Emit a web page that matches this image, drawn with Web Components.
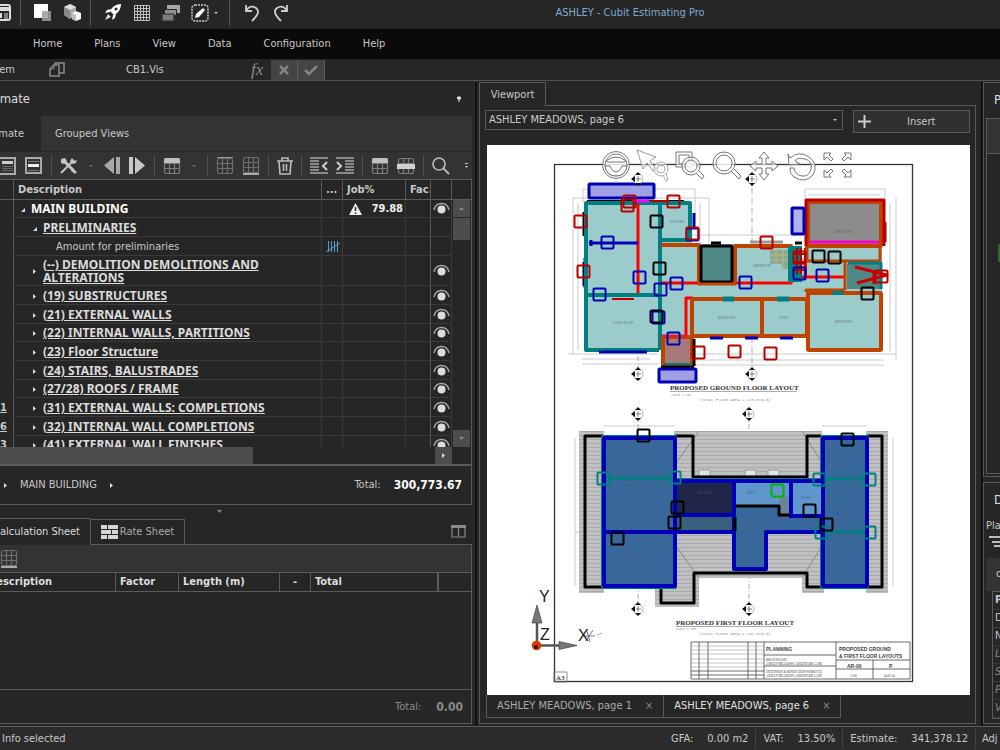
<!DOCTYPE html>
<html lang="en">
<head>
<meta charset="utf-8">
<title>ASHLEY - Cubit Estimating Pro</title>
<style>
  html, body { margin: 0; height: 100%; }
  body {
    --bg: #262626; --bar: #333333; --line: #5a5a5a; --soft: #3a3a3a; --thumb: #4d4d4d;
    background: #262626; color: #c8c8c8; overflow: hidden;
    font: 11px/16px "DejaVu Sans Condensed", "DejaVu Sans", "Noto Sans", sans-serif;
  }
</style>
</head>
<body>
<cubit-app></cubit-app>

<script>
const reset = `
  * { box-sizing: border-box; }
  button, input, select { font: inherit; color: inherit; background: none; border: 0; padding: 0; margin: 0; border-radius: 0; }
  button { display: flex; align-items: center; justify-content: center; }
  a { color: inherit; text-decoration: none; }
  table { border-spacing: 0; table-layout: fixed; width: 100%; }
  td, th { padding: 0; text-align: left; white-space: nowrap; overflow: hidden; }
`;
function define(tag, css, html, ready) {
  const tpl = document.createElement('template');
  tpl.innerHTML = `<style>${reset}${css}</style>${html}`;
  customElements.define(tag, class extends HTMLElement {
    constructor() {
      super();
      this.attachShadow({ mode: 'open' }).append(tpl.content.cloneNode(true));
    }
    connectedCallback() { if (ready) ready(this, this.shadowRoot); }
  });
}

/* ---------- icons ---------- */
const grid = (extra = '') => `<rect x="1.500" y="1.500" width="15" height="15" rx="2"/><path d="M1.500 6.500h15M1.500 11.500h15M6.500 1.500v15M11.500 1.500v15"/>${extra}`;
const ICONS = {
  form: `<rect x="-6" y="1" width="16" height="15" rx="2" fill="none" stroke="#ddd" stroke-width="2"/><path d="M-6 3h16v4h-16z" fill="#ddd"/><path d="M-1 9h3v5h-3z" fill="#ddd"/><path d="M4 10h4M4 12h4M4 14h4" stroke="#ddd"/>`,
  squares: `<path d="M8 7h9v10h-9z" fill="#8c8c8c"/><path d="M0 0h14v14h-14z" fill="#fff"/><path d="M8 7h6v7h-6z" fill="#aaa"/>`,
  cubes: `<path d="M7 0l6 3v8l-6 4-6-4v-8z" fill="#aaa"/><path d="M7 0l6 3-6 3-6-3z" fill="#ddd"/><path d="M7 6v9l-6-4v-8z" fill="#8a8a8a"/><path d="M13 7l5 2v6l-5 2-4-2v-6z" fill="#f4f4f4"/><path d="M13 11v6l-4-2v-6z" fill="#bbb"/>`,
  rocket: `<path d="M17 0c-5 0-9 3-11 7l4 4c4-2 7-6 7-11z" fill="#fff"/><path d="M7 5l-4 1-2 3 5-1zM12 10l-1 4-3 2 1-5z" fill="#fff"/><path d="M4 10l-3 6 6-3z" fill="#ddd"/><circle cx="12" cy="5" r="1.500" fill="#262626"/>`,
  mesh: `<path d="M1.500 1.500h15v15h-15zM4.500 1v16M7.500 1v16M10.500 1v16M13.500 1v16M1 4.500h16M1 7.500h16M1 10.500h16M1 13.500h16" fill="none" stroke="#bdbdbd"/>`,
  stack: `<path d="M5 1h13v8h-13z" fill="#a8a8a8"/><path d="M2.500 5.500h12v6h-12z" fill="#8e8e8e" stroke="#262626"/><path d="M0 10h12v7h-12z" fill="#7c7c7c" stroke="#262626"/>`,
  pencil: `<rect x="1" y="1" width="16" height="16" rx="3" fill="none" stroke="#ccc" stroke-width="1.500" stroke-dasharray="2 1"/><path d="M4 14l1-4 7-6 2 2-6 7z" fill="#fff"/>`,
  undo: `<path d="M3 1v6h6M3 7c2-4 6-6 10-3s2 7-4 13" fill="none" stroke="#ccc" stroke-width="1.800"/>`,
  redo: `<path d="M15 1v6h-6M15 7c-2-4-6-6-10-3s-2 7 4 13" fill="none" stroke="#ccc" stroke-width="1.800"/>`,
  caret: `<path d="M0 0h4l-2 2z" fill="currentColor"/>`,
  copies: `<path d="M6 2h9v10h-9z" fill="#262626" stroke="#8a8a8a" stroke-width="1.500"/><path d="M1 8l4-4h5v11h-9z" fill="#262626" stroke="#8a8a8a" stroke-width="1.500"/><path d="M1 8h4v-4" fill="none" stroke="#8a8a8a"/>`,
  cross: `<path d="M2 2l8 8M10 2l-8 8" stroke="#858585" stroke-width="2.500"/>`,
  tick: `<path d="M1 6l4 4 8-8" fill="none" stroke="#858585" stroke-width="2.500"/>`,
  pin: `<path d="M1 2h4M1.500 1h3v2h-3zM3 3v3" stroke="#ddd" fill="#ddd"/>`,
  band1: `<path d="M-2 1h17v16h-17z" fill="#333" stroke="#aaa" stroke-width="2"/><path d="M2 4h11v3h-11z" fill="#ccc"/><path d="M2 9.500h11M2 11.500h11M2 13.500h11" stroke="#666"/>`,
  band2: `<path d="M1 1h15v15h-15z" fill="none" stroke="#aaa" stroke-width="2"/><path d="M3 7h11v3h-11z" fill="#eee"/><path d="M3 4.500h11M3 13.500h11" stroke="#777"/>`,
  tools: `<path d="M4 4l10 10" stroke="#c4c4c4" stroke-width="3"/><path d="M1 16l13-13" stroke="#c4c4c4" stroke-width="2"/><path d="M1 2l4-1 2 3-3 3-3-1zM12 1l2 3 3-1-1 3-4 1-2-3zM13 12l4 3-2 2-4-3z" fill="#c4c4c4"/>`,
  prev: `<path d="M10 0v17l-10-8.500zM12 0h4v17h-4z" fill="#a8a8a8"/>`,
  next: `<path d="M6 0v17l10-8.500zM0 0h4v17h-4z" fill="#c8c8c8"/>`,
  gridtop: `<g fill="none" stroke="#7c7c7c" stroke-width="1.200">${grid()}</g><path d="M1 6v-3q0-2 2-2h12q2 0 2 2v3z" fill="#c0c0c0"/>`,
  gridmid: `<g fill="none" stroke="#7c7c7c" stroke-width="1.200">${grid()}</g><path d="M0 7h18v5h-18z" fill="#d0d0d0"/>`,
  gridline: `<g fill="none" stroke="#6e6e6e" stroke-width="1.200">${grid()}</g><path d="M1 0h16" stroke="#999" stroke-width="2"/>`,
  gridunder: `<g fill="none" stroke="#6e6e6e" stroke-width="1.200">${grid()}</g><path d="M1 18h16" stroke="#aaa" stroke-width="2"/>`,
  trash: `<path d="M0 4h16M5 4v-3h6v3M2 4l1 13h10l1-13M6.500 7v7M9.500 7v7" fill="none" stroke="#bdbdbd" stroke-width="1.600"/>`,
  outdent: `<path d="M0 1h18M0 4h9M0 7h9M0 10h9M0 13h9M0 16h18" stroke="#a8a8a8" stroke-width="1.500"/><path d="M17 5l-4 4 4 4" fill="none" stroke="#ccc" stroke-width="2"/>`,
  indent: `<path d="M0 1h18M9 4h9M9 7h9M9 10h9M9 13h9M0 16h18" stroke="#a8a8a8" stroke-width="1.500"/><path d="M1 5l4 4-4 4" fill="none" stroke="#ccc" stroke-width="2"/>`,
  search: `<circle cx="7" cy="7" r="6" fill="none" stroke="#bbb" stroke-width="1.600"/><path d="M11 11l6 6" stroke="#bbb" stroke-width="1.800"/>`,
  more: `<path d="M0 0h3v1h-3zM0 3h3l-1.500 2z" fill="#ccc"/>`,
  open: `<path d="M4 1v4h-4z" fill="#ddd"/>`,
  shut: `<path d="M0 0v5l3-2.500z" fill="#ddd"/>`,
  warn: `<path d="M6.500 0l6.500 12h-13z" fill="#f2f2f2"/><path d="M6.500 4v4M6.500 9.500v1.500" stroke="#262626" stroke-width="1.600"/>`,
  eye: `<circle cx="8.500" cy="7.500" r="4" fill="#dcdcdc"/><path d="M1 8q1.500-6.500 7.500-6.500t7.500 6.500" fill="none" stroke="#aaa" stroke-width="1.300"/>`,
  tally: `<path d="M2.500 0v11M5.500 0v11M8.500 0v11M11.500 0v11M0 11l14-9" stroke="#5a9bd0" stroke-width="1" fill="none"/>`,
  up: `<path d="M0 3h5l-2.500-3z" fill="#8a8a8a"/>`,
  down: `<path d="M0 0h5l-2.500 3z" fill="#8a8a8a"/>`,
  bricks: `<path d="M0 0h6v4h-6zM7 0h10v4h-10zM0 5h10v4h-10zM11 5h6v4h-6zM0 10h6v4h-6zM7 10h10v4h-10z" fill="#d6d6d6"/>`,
  panes: `<path d="M1 1h13v11h-13zM7.500 3v9" fill="none" stroke="#888" stroke-width="1.200"/><path d="M0 0h15v3h-15z" fill="#888"/>`,
  plus: `<path d="M0 6.500h13M6.500 0v13" stroke="#ccc" stroke-width="2"/>`,
  filter: `<path d="M0 1h16M3 6h12M5 10h8" stroke="#bbb" stroke-width="1.800"/>`,
};
customElements.define('cubit-icon', class extends HTMLElement {
  connectedCallback() {
    const [w, h] = (this.getAttribute('size') || '18 18').split(' ');
    const root = this.shadowRoot || this.attachShadow({ mode: 'open' });
    root.innerHTML = `<style>:host{display:inline-block;flex:none;width:${w}px;height:${h}px}svg{display:block}</style>
      <svg width="${w}" height="${h}" viewBox="0 0 ${w} ${h}" aria-hidden="true">${ICONS[this.getAttribute('name')]}</svg>`;
  }
});

/* ---------- title bar, menu, formula bar ---------- */
define('title-bar', `
  :host { display: flex; align-items: center; height: 29px; padding-bottom: 3px; }
  button { height: 24px; margin-right: 11px; }
  .wide { gap: 5px; }
  i { width: 1px; height: 26px; background: #555; margin-right: 13px; flex: none; }
  .last { margin-right: 9px; }
  h1 { flex: 1; margin: 0; padding-right: 41px; text-align: center; font-size: 11px; line-height: 16px; font-weight: 400; color: #7fabd0; white-space: nowrap; }
`, `
  <button aria-label="Form" class="last"><cubit-icon name="form" size="11 18"></cubit-icon></button><i></i>
  <button aria-label="Areas"><cubit-icon name="squares"></cubit-icon></button>
  <button aria-label="Items" class="last"><cubit-icon name="cubes"></cubit-icon></button><i></i>
  <button aria-label="Launch" ><cubit-icon name="rocket"></cubit-icon></button>
  <button aria-label="Sheet"><cubit-icon name="mesh"></cubit-icon></button>
  <button aria-label="Layers"><cubit-icon name="stack"></cubit-icon></button>
  <button aria-label="Edit" class="wide"><cubit-icon name="pencil"></cubit-icon><cubit-icon name="caret" size="4 2"></cubit-icon></button><i></i>
  <button aria-label="Undo"><cubit-icon name="undo"></cubit-icon></button>
  <button aria-label="Redo"><cubit-icon name="redo"></cubit-icon></button>
  <h1>ASHLEY - Cubit Estimating Pro</h1>
`);
define('menu-bar', `
  :host { display: block; background: #0a0a0a; }
  nav { display: flex; gap: 32px; padding: 7px 33px; }
`, `<nav><a href="#home">Home</a><a href="#plans">Plans</a><a href="#view">View</a><a href="#data">Data</a><a href="#config">Configuration</a><a href="#help">Help</a></nav>`);
define('formula-bar', `
  :host { display: flex; align-items: center; height: 22px; border-bottom: 1px solid #505050; overflow: hidden; }
  .kind { width: 15px; display: flex; justify-content: flex-end; flex: none; margin-right: 34px; }
  .name { width: 125px; margin-left: 60px; }
  em { font: italic 17px/18px "Liberation Serif", serif; color: #8a8a8a; width: 20px; }
  button { width: 27px; height: 20px; background: #444; border-right: 1px solid #5a5a5a; }
  .value { flex: 1; height: 20px; }
`, `
  <span class="kind">tem</span><cubit-icon name="copies" size="17 18"></cubit-icon>
  <input class="name" aria-label="Name" value="CB1.Vis"><em>fx</em>
  <button aria-label="Cancel"><cubit-icon name="cross" size="12 12"></cubit-icon></button>
  <button aria-label="Accept"><cubit-icon name="tick" size="14 12"></cubit-icon></button>
  <input class="value" aria-label="Value">
`);

/* ---------- estimate panel ---------- */
const ROWS = [
  { level: 0, text: 'MAIN BUILDING', open: true, job: '79.88', eye: true },
  { level: 1, text: 'PRELIMINARIES', open: true },
  { level: 2, text: 'Amount for preliminaries', tally: true },
  { level: 1, text: '(--) DEMOLITION DEMOLITIONS AND ALTERATIONS', eye: true, tall: true },
  { level: 1, text: '(19) SUBSTRUCTURES', eye: true },
  { level: 1, text: '(21) EXTERNAL WALLS', eye: true },
  { level: 1, text: '(22) INTERNAL WALLS, PARTITIONS', eye: true },
  { level: 1, text: '(23) Floor Structure', eye: true },
  { level: 1, text: '(24) STAIRS, BALUSTRADES', eye: true },
  { level: 1, text: '(27/28) ROOFS / FRAME', eye: true },
  { level: 1, text: '(31) EXTERNAL WALLS: COMPLETIONS', eye: true, no: '1' },
  { level: 1, text: '(32) INTERNAL WALL COMPLETIONS', eye: true, no: '6' },
  { level: 1, text: '(41) EXTERNAL WALL FINISHES', eye: true, no: '3' },
];
define('estimate-table', `
  :host { display: flex; min-height: 0; overflow: hidden; border: 1px solid var(--line); border-left: 0; border-bottom: 0; }
  .scroll { width: 19px; display: flex; flex-direction: column; flex: none; padding: 0 1px 0 1px; }
  .scroll b { height: 20px; border-bottom: 1px solid var(--line); margin: 0 -1px; }
  .scroll button { height: 17px; background: var(--thumb); flex: none; }
  .scroll i { height: 22px; background: var(--thumb); margin: 1px 0 auto; flex: none; }
  .rows { flex: 1; overflow: hidden; }
  th { height: 20px; border-right: 1px solid var(--line); border-bottom: 1px solid var(--line); padding-left: 4px; font-weight: 700; line-height: 16px; }
  td { height: 19px; border-right: 1px solid var(--soft); border-bottom: 1px solid var(--soft); line-height: 13px; }
  tr:nth-child(3n+1) td { height: 18px; }
  tr.tall td { height: 30px; }
  tr td:first-child, tr td:nth-child(5) { border-right-color: var(--line); }
  td:first-child { border-bottom-color: transparent; font-weight: 700; text-decoration: underline; }
  td:nth-child(3) { padding-left: 4px; }
  td:nth-child(6) { padding-left: 2px; }
  .item { display: flex; align-items: center; color: #dcdcdc; font: 700 12px/13px "Noto Sans", "Open Sans", sans-serif; }
  .item span { white-space: normal; max-width: 230px; text-decoration: underline; }
  .item.l0 { padding-left: 4px; color: #fff; } .item.l0 span { text-decoration: none; }
  .item.l1 { padding-left: 16px; }
  .item.l2 { padding-left: 42px; color: #c8c8c8; font: inherit; } .item.l2 span { text-decoration: none; }
  .twisty { width: 13px; flex: none; display: flex; justify-content: flex-start; padding: 2px 0 0 3px; }
  .job { display: flex; align-items: center; justify-content: space-between; padding: 0 2px 0 6px; font-weight: 700; color: #f0f0f0; }
  .item.l2 .twisty { display: none; }
  cubit-icon { vertical-align: middle; }
`, `
  <div class="rows"><table>
    <colgroup><col style="width:14px"><col><col style="width:21px"><col style="width:63px"><col style="width:25px"><col style="width:21px"></colgroup>
    <thead><tr><th></th><th>Description</th><th>...</th><th>Job%</th><th>Fac.</th><th></th></tr></thead>
    <tbody></tbody></table></div>
  <div class="scroll"><b></b><button aria-label="Scroll up"><cubit-icon name="up" size="5 3"></cubit-icon></button><i></i><button aria-label="Scroll down"><cubit-icon name="down" size="5 3"></cubit-icon></button></div>
`, (host, root) => {
  root.querySelector('tbody').innerHTML = ROWS.map(r => `<tr class="${r.tall ? 'tall' : ''}">
    <td>${r.no || ''}</td>
    <td><div class="item l${r.level}"><div class="twisty"><cubit-icon name="${r.open ? 'open' : 'shut'}" size="4 5"></cubit-icon></div><span>${r.text}</span></div></td>
    <td>${r.tally ? '<cubit-icon name="tally" size="14 12"></cubit-icon>' : ''}</td>
    <td>${r.job ? `<div class="job"><cubit-icon name="warn" size="13 12"></cubit-icon>${r.job}</div>` : ''}</td>
    <td></td><td>${r.eye ? '<cubit-icon name="eye" size="17 13"></cubit-icon>' : ''}</td></tr>`).join('');
});
define('estimate-panel', `
  :host { display: flex; flex-direction: column; min-height: 0; }
  header { display: flex; align-items: center; justify-content: space-between; height: 34px; flex: none; padding-right: 10px; }
  h2 { margin: 0; width: 30px; display: flex; justify-content: flex-end; font-size: 13px; font-weight: 400; color: #ddd; }
  .tabs { display: flex; height: 35px; background: var(--bar); flex: none; }
  .tabs button { padding: 0 14px; }
  .tabs button:first-child { width: 41px; justify-content: flex-end; padding: 0 17px 0 0; background: var(--bg); }
  .tools { display: flex; align-items: center; height: 28px; background: var(--bar); flex: none; padding-right: 4px; gap: 8px; border-top: 1px solid var(--bg); }
  .tools i { width: 1px; height: 22px; background: #505050; }
  .tools button { height: 24px; }
  .tools cubit-icon[name=caret] { color: #777; margin: 0 3px; }
  .tools cubit-icon[name=more] { margin-left: auto; }
  estimate-table { flex: 1; }
  .hbar { display: flex; justify-content: space-between; height: 17px; flex: none; padding-right: 19px; border-right: 1px solid var(--line); }
  .hbar i { width: 56%; background: var(--thumb); height: 17px; }
  .hbar button { width: 17px; height: 17px; background: var(--thumb); }
  footer { display: flex; align-items: center; height: 41px; flex: none; border: 1px solid var(--line); border-left: 0; border-top-width: 2px; padding: 0 9px 0 4px; gap: 13px; }
  footer b { font-size: 12px; color: #fff; }
  footer label { margin-left: auto; }
`, `
  <header><h2>mate</h2><cubit-icon name="pin" size="6 6"></cubit-icon></header>
  <div class="tabs"><button>mate</button><button>Grouped Views</button></div>
  <div class="tools">
    <button aria-label="Top level"><cubit-icon name="band1" size="17 18"></cubit-icon></button>
    <button aria-label="Row"><cubit-icon name="band2"></cubit-icon></button><i></i>
    <button aria-label="Tools"><cubit-icon name="tools"></cubit-icon></button><cubit-icon name="caret" size="4 2"></cubit-icon>
    <button aria-label="Previous"><cubit-icon name="prev" size="17 17"></cubit-icon></button>
    <button aria-label="Next"><cubit-icon name="next" size="17 17"></cubit-icon></button><i></i>
    <button aria-label="Header"><cubit-icon name="gridtop"></cubit-icon></button><cubit-icon name="caret" size="4 2"></cubit-icon><i></i>
    <button aria-label="Insert above"><cubit-icon name="gridline"></cubit-icon></button>
    <button aria-label="Insert below"><cubit-icon name="gridunder" size="18 19"></cubit-icon></button><i></i>
    <button aria-label="Delete"><cubit-icon name="trash" size="16 18"></cubit-icon></button><i></i>
    <button aria-label="Outdent"><cubit-icon name="outdent"></cubit-icon></button>
    <button aria-label="Indent"><cubit-icon name="indent"></cubit-icon></button><i></i>
    <button aria-label="Top rows"><cubit-icon name="gridtop"></cubit-icon></button>
    <button aria-label="Middle rows"><cubit-icon name="gridmid"></cubit-icon></button><i></i>
    <button aria-label="Search"><cubit-icon name="search"></cubit-icon></button>
    <cubit-icon name="more" size="3 5"></cubit-icon>
  </div>
  <estimate-table></estimate-table>
  <div class="hbar"><i></i><button aria-label="Scroll right"><cubit-icon name="shut" size="3 5"></cubit-icon></button></div>
  <footer><cubit-icon name="shut" size="3 5"></cubit-icon><span>MAIN BUILDING</span><cubit-icon name="shut" size="3 5"></cubit-icon><label>Total:</label><b>300,773.67</b></footer>
`);

/* ---------- calculation sheet ---------- */
define('calc-panel', `
  :host { display: flex; flex-direction: column; min-height: 0; }
  .grip { height: 13px; display: flex; justify-content: center; align-items: center; padding-right: 34px; flex: none; }
  .tabs { display: flex; align-items: flex-end; height: 27px; flex: none; border-bottom: 1px solid var(--line); padding-right: 4px; }
  .tabs button { border: 1px solid var(--line); border-bottom: 0; height: 25px; }
  .tabs button:first-child { width: 91px; height: 27px; margin-bottom: -1px; border-left: 0; background: var(--bg); justify-content: flex-end; padding-right: 10px; color: #ddd; white-space: nowrap; }
  .tabs .rate { width: 94px; gap: 2px; border-left: 0; color: #aaa; }
  .tabs .view { border: 0; margin: 0 2px 0 auto; }
  .box { flex: 1; display: flex; flex-direction: column; border-right: 1px solid var(--line); border-bottom: 1px solid var(--line); }
  .tools { height: 28px; background: var(--bar); display: flex; align-items: center; border-bottom: 1px solid var(--line); }
  table { flex: none; }
  th { height: 19px; padding-left: 4px; border-right: 1px solid var(--line); border-bottom: 1px solid var(--line); color: #ddd; }
  th:last-child { border-right: 0; }
  th:nth-child(5) { border-right-width: 2px; }
  th div { display: flex; justify-content: flex-end; width: 48px; }
  th.mid { text-align: center; padding: 0; }
  .empty { flex: 1; border-bottom: 1px solid var(--line); }
  footer { height: 33px; display: flex; align-items: center; justify-content: flex-end; gap: 15px; padding-right: 8px; color: #8a8a8a; }
  footer b { font-size: 12px; }
`, `
  <div class="grip"><cubit-icon name="down" size="5 3"></cubit-icon></div>
  <div class="tabs"><button>Calculation Sheet</button><button class="rate"><cubit-icon name="bricks" size="17 14"></cubit-icon>Rate Sheet</button><button class="view" aria-label="Split view"><cubit-icon name="panes" size="15 13"></cubit-icon></button></div>
  <div class="box">
    <div class="tools"><button aria-label="Insert row"><cubit-icon name="gridunder" size="18 19"></cubit-icon></button></div>
    <table><colgroup><col style="width:116px"><col style="width:63px"><col style="width:101px"><col style="width:31px"><col style="width:128px"><col></colgroup>
      <thead><tr><th><div>escription</div></th><th>Factor</th><th>Length (m)</th><th class="mid">-</th><th>Total</th><th></th></tr></thead></table>
    <div class="empty"></div>
    <footer><span>Total:</span><b>0.00</b></footer>
  </div>
`);

/* ---------- plan drawing ---------- */
const sq = (x, y, c) => `<rect x="${x - 5.5}" y="${y - 5.5}" width="12" height="12" rx="1" fill="none" stroke="${c}" stroke-width="2"/>`;
const room = (x1, y1, x2, y2, c, fill = 'none', w = 4) => `<rect x="${x1}" y="${y1}" width="${x2 - x1}" height="${y2 - y1}" rx="1" fill="${fill}" stroke="${c}" stroke-width="${w}"/>`;
const line = (d, c, w = 3) => `<path d="${d}" fill="none" stroke="${c}" stroke-width="${w}" stroke-linejoin="round"/>`;
const mark = (x, y) => `<g><circle cx="${x}" cy="${y}" r="5" fill="#fff" stroke="#999" stroke-width=".7"/><path d="M${x - 7} ${y}l4-3v6zM${x - 3} ${y - 4}l3-3 3 3zM${x - 3} ${y + 4}l3 3 3-3z" fill="#111"/><path d="M${x - 2} ${y}h5M${x} ${y - 3}v6" stroke="#555" stroke-width=".7"/></g>`;
const T = '#008080', O = '#c04400', R = '#b80000', B = '#0000b4', L = '#9bcccb', K = '#000';
const dim = d => line(d, '#b4b4b4', .7);
const rf = (x1, y1, x2, y2) => `<rect x="${x1}" y="${y1}" width="${x2 - x1}" height="${y2 - y1}" fill="url(#tiles)"/>`;
const tag = (x, y, t, size = 3) => `<text x="${x}" y="${y}" font-size="${size}" fill="#557" text-anchor="middle" opacity=".7">${t}</text>`;
define('plan-drawing', `
  :host { display: block; background: #fff; overflow: hidden; }
  svg { display: block; width: 100%; height: 100%; font-family: "Liberation Sans", sans-serif; }
  .serif { font-family: "Liberation Serif", serif; font-weight: 700; fill: #333; }
  .mono { font-family: "Liberation Mono", monospace; fill: #999; }
  .fine { font-weight: 400; }
`, `
<svg viewBox="487 145 483 550" role="img" aria-label="Floor plans">
  <defs><pattern id="tiles" width="6" height="4" patternUnits="userSpaceOnUse"><rect width="6" height="4" fill="#c0c0c0"/><path d="M0 3.500h6" stroke="#aaa"/></pattern></defs>
  <rect x="554.500" y="164.500" width="358" height="517" fill="none" stroke="#333" stroke-width="1.300"/>
  ${dim('M583 189h112M573 198h136M583 189v14M709 198v95M573 198v156M578 203v147M700 203v92M695 189v30M676 235h116M568 354h90M582 364h76M582 359h68M805 189h80M808 195h72M805 189v10M885 189v10M896 198v162M890 203v148M696 354h200M696 360h188M696 365h188')}
  ${dim('M603 426h72M822 426h45M575 438v148M893 438v148M575 532h6')}
  <path d="M638 176v195M752 178v190M638 414v190M749 414v190" stroke="#999" stroke-width=".8" stroke-dasharray="5 2 1 2"/>

  <path d="M586 203h106v41h99v14h15v-14h76v107h-74v-15h-115v31h-31v-17h-76z" fill="${L}"/>
  ${room(589, 184, 654, 198, B, '#a0a0e4', 3)}
  ${line('M587 201h97', K, 2)}${line('M584 212v24M584 262v24', K, 3)}${line('M585 258v30', B, 3)}
  ${line('M586 298V203H690V240H660M586 295V350H659M660 203V350M586 295H660', T, 4)}
  ${line('M638 204V293', '#ff0000', 3)}${line('M660 283H791V277H846', '#ff0000', 3)}
  ${line('M632 201h17', '#ff00ff', 3)}${line('M651 201h18M612 299h22', R, 2)}
  ${line('M589 243H638M591 240v6', B, 3)}${line('M599 352h48', B, 3)}${line('M694 213v14', B, 3)}
  ${line('M686 336V298H693', '#ff0000', 3)}
  ${line('M661 245H699V283', O, 4)}${line('M735 283V246H791V283', O, 4)}
  ${room(701, 246, 732, 282, K, '#508885', 3)}${line('M698 284H736', O, 3)}
  <path d="M770 250h20v19h-8v-5h-12z" fill="#8ca98b"/><path d="M770 255h20M770 260h20M776 250v14M783 250v19" stroke="#b9b78a" stroke-width="1"/>
  ${line('M750 242h33', '#999', 3)}${line('M711 243h10M795 243h7', K, 3)}
  ${room(692, 299, 762, 336, O)}${room(762, 299, 807, 336, O)}
  ${line('M723 299h11M777 299h12', T, 5)}
  ${line('M792 246v36M798 246v36', T, 8)}${line('M805 248v32M793 254h12M793 262h12M793 270h12M797 248v26M801 248v26', R, 2)}${line('M806 246v32', '#ff0000', 2)}
  ${room(808, 202, 881, 246, O, '#8c8c8c', 4)}${line('M806 246V200H884V246M885 222v20', R, 3)}${line('M810 242H879', '#f0c', 3)}
  ${line('M807 246V261H880V246M845 261V290', O, 3)}${line('M806 292V290H845', O, 3)}
  <path d="M847 264h34v25h-34z" fill="#4f8885"/>${line('M848 263h33v26', T, 3)}
  ${line('M855 267l32 8-30 8M874 270v14', '#cc0000', 3)}
  ${room(808, 293, 881, 350, O)}${line('M832 293h11', T, 4)}
  ${room(663, 337, 692, 366, O, '#a57a78')}${line('M694 339v27M661 367h33', K, 3)}${line('M664 364h27', T, 2)}
  ${room(659, 369, 696, 382, B, '#a0a0e4', 3)}${line('M710 338h13M745 338h13M780 338h13', B, 3)}
  ${line('M661 336h25', '#d22', 3)}
  ${room(792, 208, 804, 234, B, '#b0b0ea', 3)}
  ${[[607, 242], [599, 294], [639, 277], [676, 283], [660, 289], [658, 317], [673, 338], [692, 234], [745, 282], [799, 273], [822, 275]].map(p => sq(...p, B)).join('')}
  ${[[629, 201], [627, 205], [673, 201], [580, 221], [583, 271], [692, 233], [766, 242], [799, 257], [698, 352], [734, 351], [770, 353], [881, 276]].map(p => sq(...p, R)).join('')}
  ${[[656, 221], [659, 268], [656, 316], [818, 256], [834, 257], [867, 293]].map(p => sq(...p, K)).join('')}
  ${tag(623, 324, 'LIVING ROOM')}${tag(677, 223, 'KITCHEN')}${tag(844, 233, 'BEDROOM 1')}${tag(762, 267, 'BATHROOM')}${tag(727, 319, 'BEDROOM 2')}${tag(784, 319, 'STUDY')}${tag(844, 323, 'BEDROOM 3')}
  ${mark(638, 179)}${mark(752, 179)}${mark(638, 374)}${mark(752, 374)}
  <text class="serif" x="670" y="390" font-size="7">PROPOSED GROUND FLOOR LAYOUT</text><path d="M670 391.500h127" stroke="#888" stroke-width=".7"/>
  <text class="mono" x="671" y="396" font-size="3">SCALE 1:100</text>
  <text class="mono" x="699" y="401" font-size="4">(TOTAL FLOOR AREA = 220.5sq.m)</text>

  ${rf(579, 431, 604, 593)}${rf(866, 431, 888, 593)}${rf(674, 431, 822, 482)}${rf(674, 530, 822, 578)}${rf(655, 587, 699, 607)}${rf(674, 572, 699, 592)}${rf(802, 572, 824, 593)}
  ${line('M699 431L676 463M802 431L822 463M676 546L699 578M822 546L802 578', '#888', 1)}
  <path d="M699 470h11v6h-11zM745 470h11v6h-11zM768 470h11v6h-11z" fill="#dde6ee" stroke="#999"/>
  ${line('M603 436H585V587H603M867 436H882V587H868M675 436H693V477H807V436H821M661 589V603H694V573H807V587H822', K, 3)}
  ${room(602, 436, 676, 588, T, '#38689a', 2)}${room(821, 436, 868, 588, T, '#38689a', 2)}
  ${line('M676 479H821', T, 2)}
  <path d="M676 481h58v35h-58z" fill="#1f2647"/><path d="M676 516h58v16h-58z" fill="#39607a"/>
  <path d="M734 481h57v35h-57z" fill="#5f96cb"/><path d="M779 497h11v18h-11z" fill="#6d8593"/><path d="M791 481h31v35h-31z" fill="#5f96cb"/>
  <path d="M734 506h45v10h43v16h-56v37h-32z" fill="#38689a"/>
  ${line('M603 478H675M822 479H867M822 532H867', T, 3)}
  ${room(604, 438, 675, 586, '#0000b8')}${room(823, 438, 867, 586, '#0000b8')}
  ${line('M603 532H734V569H766V532H822M676 481H821M734 481V532M676 515H734M791 481V515M789 516H822', '#0000b8', 4)}
  ${line('M736 506H779V515H790M735 517v14', K, 3)}
  ${[[603, 478], [674, 477], [819, 479], [869, 479], [821, 532], [869, 532]].map(p => sq(...p, T)).join('')}
  ${[[643, 435], [617, 538], [677, 507], [674, 522], [847, 439], [809, 510], [826, 524]].map(p => sq(...p, K)).join('')}
  ${sq(777, 490, '#00b400')}
  ${tag(639, 486, 'MASTER BEDROOM')}${tag(639, 560, 'BEDROOM')}${tag(705, 494, 'DRESSING')}${tag(751, 494, 'BATH')}${tag(806, 499, 'STORE')}${tag(845, 513, 'BEDROOM')}${tag(750, 525, 'LANDING')}
  ${mark(638, 414)}${mark(749, 414)}${mark(638, 609)}${mark(749, 609)}
  <text class="serif" x="676" y="625" font-size="7">PROPOSED FIRST FLOOR LAYOUT</text><path d="M676 626.500h115" stroke="#888" stroke-width=".7"/>
  <text class="mono" x="676" y="630" font-size="3">SCALE 1:100</text>
  <text class="mono" x="699" y="635" font-size="4">(TOTAL FLOOR AREA = 152.0sq.m)</text>

  <g fill="none" stroke="#444" stroke-width=".8"><path d="M691 642h219v37h-219zM764 642v37M836 642v37M699 642v37M708 642v37M748 642v37M756 642v37M764 655h72M764 666h72M836 660h74M836 669h74M873 660v19M691 675h73M691 671h73" /><path d="M691 646h73M691 650h73M691 654h73M691 659h73M691 663h73M691 667h73" stroke="#888" stroke-width=".5"/></g>
  <g fill="#444" font-weight="700"><text x="766" y="651" font-size="5">PLANNING</text><text x="839" y="651" font-size="5">PROPOSED GROUND</text><text x="839" y="658" font-size="5">&amp; FIRST FLOOR LAYOUTS</text><text x="847" y="668" font-size="5">AR-06</text><text x="889" y="668" font-size="5">P</text></g>
  <g class="serif fine" font-size="3"><text x="766" y="661">BRIAN WALSH</text><text x="766" y="665">ASHLEY MEADOWS, GREENPARK LANE</text><text x="766" y="673">EXTENSION &amp; RENOVATION WORKS TO</text><text x="766" y="677">ASHLEY MEADOWS, GREENPARK LANE</text><text x="850" y="677">1:100</text><text x="884" y="677">04.02.24</text></g>
  <path d="M554 672h13v10h-13z" fill="none" stroke="#777" stroke-width=".8"/><text x="556" y="680" font-size="7" font-family="Liberation Serif">A3</text>

  <g fill="#fff" fill-opacity=".6" stroke="#777" stroke-width="1">
    <circle cx="616" cy="165" r="13.500"/><circle cx="616" cy="165" r="11"/><path d="M606 161q10-8 20 0l-2 1h-16zM605 166h5q2 6 6 6t6-6h5q-1 10-11 10t-11-10z"/>
    <path d="M637 150l19 7-6 4 6 8-3 2-6-8-4 6z" stroke="#999"/><circle cx="661" cy="169" r="7" stroke="#aaa"/><circle cx="661" cy="169" r="4" stroke="#aaa"/><path d="M663 175l3 6 2-1-2-6" stroke="#aaa"/>
    <path d="M676 152h16v15h-16zM679 155h10v9h-10z"/><circle cx="691" cy="166" r="9"/><circle cx="691" cy="166" r="6"/><path d="M696 173l6 6 2-3-6-6"/>
    <circle cx="724" cy="163" r="11"/><circle cx="724" cy="163" r="8"/><path d="M731 171l8 8 2-3-7-7"/>
    <path d="M764 152l5 6h-3v6h6v-3l6 5-6 5v-3h-6v6h3l-5 6-5-6h3v-6h-6v3l-6-5 6-5v3h6v-6h-3z"/>
    <path d="M788 154l2 4q9-8 19-1t4 18q-8 9-19 2-5-4-4-9h4q1 7 8 8t9-7-6-10-10 2l5 3-11 1z"/>
    ${[[828, 157, 1, 1], [847, 157, -1, 1], [828, 173, 1, -1], [847, 173, -1, -1]].map(([x, y, a, b]) => `<path transform="translate(${x} ${y}) scale(${a} ${b})" d="M-4-4h7l-2 2 4 4-2 2-4-4-3 3z"/>`).join('')}
  </g>
  <path d="M537 645V620M541 645.500H560" stroke="#555" stroke-width="2.500"/><path d="M537 605l5 18h-10zM577 645.500l-18-4v8z" fill="#777" stroke="#444" stroke-width=".7"/><circle cx="536.500" cy="645.500" r="4.800" fill="#d83a00"/><circle cx="536" cy="647" r="2" fill="#400"/>
  <path d="M583 636h12M587 631l3 11M593 630l-7 11" stroke="#555" stroke-width=".8"/><path d="M597 635l5-2" stroke="#aaa"/>
  <g fill="#222" font-size="16"><text x="539" y="602">Y</text><text x="540" y="640">Z</text><text x="578" y="641">X</text></g>
</svg>
`);

/* ---------- viewport ---------- */
define('viewport-panel', `
  :host { display: flex; flex-direction: column; min-height: 0; padding: 0 5px 2px 2px; border-left: 2px solid #111; border-right: 2px solid #111; }
  .top { flex: none; display: flex; }
  .top button { height: 24px; width: 67px; border: 1px solid var(--line); border-bottom: 0; margin-bottom: -1px; background: var(--bg); position: relative; }
  .body { flex: 1; min-height: 0; display: flex; flex-direction: column; border: 1px solid var(--line); padding: 4px 5px 5px; }
  .pick { display: flex; gap: 10px; margin-bottom: 12px; flex: none; align-items: flex-start; }
  .combo { flex: 1; display: flex; align-items: center; border: 1px solid var(--line); padding-right: 5px; color: #ccc; height: 20px; }
  select { appearance: none; flex: 1; height: 18px; padding-left: 3px; }
  .insert { width: 117px; height: 23px; background: #303030; border: 1px solid var(--line); justify-content: flex-start; gap: 36px; padding-left: 4px; }
  plan-drawing { flex: 1; min-height: 0; margin-left: 2px; }
  .pages { flex: none; display: flex; align-items: flex-start; margin-left: 1px; }
  .pages div { height: 23px; border: 1px solid var(--line); border-top: 0; display: flex; align-items: center; gap: 13px; padding: 0 10px 0 10px; color: #aaa; }
  .pages div + div { border-left: 0; color: #e0e0e0; }
  .pages .x { color: #888; }
`, `
  <div class="top"><button>Viewport</button></div>
  <div class="body">
    <div class="pick">
      <div class="combo"><select aria-label="Page"><option>ASHLEY MEADOWS, page 6</option></select><cubit-icon name="caret" size="4 2"></cubit-icon></div>
      <button class="insert"><cubit-icon name="plus" size="13 13"></cubit-icon>Insert</button>
    </div>
    <plan-drawing></plan-drawing>
    <div class="pages"><div><button>ASHLEY MEADOWS, page 1</button><button class="x" aria-label="Close page 1">×</button></div><div><button>ASHLEY MEADOWS, page 6</button><button class="x" aria-label="Close page 6">×</button></div></div>
  </div>
`);

/* ---------- right-hand docks ---------- */
define('side-panels', `
  :host { display: flex; flex-direction: column; gap: 5px; min-height: 0; padding-bottom: 2px; overflow: hidden; }
  section { border: 1px solid var(--line); border-right: 0; display: flex; flex-direction: column; overflow: hidden; }
  .a { flex: 396; } .b { flex: 242; }
  h2 { margin: 9px 0 10px 10px; font-size: 13px; line-height: 16px; font-weight: 400; color: #ddd; }
  .inner { flex: 1; margin: 0 0 2px 2px; border: 1px solid var(--line); border-right: 0; }
  .inner i { display: block; height: 35px; background: var(--bar); border-bottom: 1px solid var(--line); }
  .inner b { display: block; width: 2px; height: 18px; margin: 90px 0 0 auto; background: #2c6b2c; }
  p { margin: 0 0 2px 2px; }
  .b h2 { margin-bottom: 10px; }
  .filter { margin-left: 5px; }
  .band { height: 33px; background: var(--bar); margin: 10px 0 0 2px; padding: 8px 10px; }
  table { margin-left: 8px; border: 1px solid var(--line); border-right: 0; }
  td, th { height: 18px; padding-left: 2px; border-bottom: 1px solid var(--soft); }
  .dim { font-style: italic; color: #888; }
`, `
  <section class="a"><h2>P</h2><div class="inner"><i></i><b></b></div></section>
  <section class="b"><h2>D</h2><p>Pla</p><cubit-icon class="filter" name="filter" size="16 12"></cubit-icon><div class="band">o</div>
    <table><tr><th>P</th></tr><tr><td>D</td></tr><tr><td>N</td></tr><tr><td class="dim">L</td></tr><tr><td class="dim">S</td></tr><tr><td class="dim">P</td></tr><tr><td class="dim">V</td></tr></table></section>
`);
define('status-bar', `
  :host { display: flex; align-items: center; height: 24px; background: #2b2b2b; border-top: 1px solid var(--line); padding-left: 2px; white-space: nowrap; overflow: hidden; }
  div { display: flex; gap: 14px; border-right: 1px solid #444; padding: 2px 7px; flex: none; }
  .info { flex: 1; border: 0; padding: 0; }
  .adj { width: 24px; border: 0; padding: 2px 0 2px 6px; }
`, `
  <div class="info">Info selected</div><div><span>GFA:</span><span>0.00 m2</span></div><div><span>VAT:</span><span>13.50%</span></div><div><span>Estimate:</span><span>341,378.12</span></div><div class="adj">Adj</div>
`);
define('cubit-app', `
  :host { display: flex; flex-direction: column; height: 100vh; overflow: hidden; }
  main { flex: 1; min-height: 0; display: grid; grid-template-columns: minmax(0, 475fr) minmax(0, 508fr) minmax(0, 17fr); padding-top: 1px; }
  .left { display: flex; flex-direction: column; min-height: 0; padding: 0 3px 2px 0; }
  estimate-panel { flex: 424 0 0; } calc-panel { flex: 219 0 0; }
  title-bar, menu-bar, formula-bar, status-bar { flex: none; }
`, `
  <title-bar></title-bar><menu-bar></menu-bar><formula-bar></formula-bar>
  <main><div class="left"><estimate-panel></estimate-panel><calc-panel></calc-panel></div><viewport-panel></viewport-panel><side-panels></side-panels></main>
  <status-bar></status-bar>
`);
</script>
</body>
</html>
